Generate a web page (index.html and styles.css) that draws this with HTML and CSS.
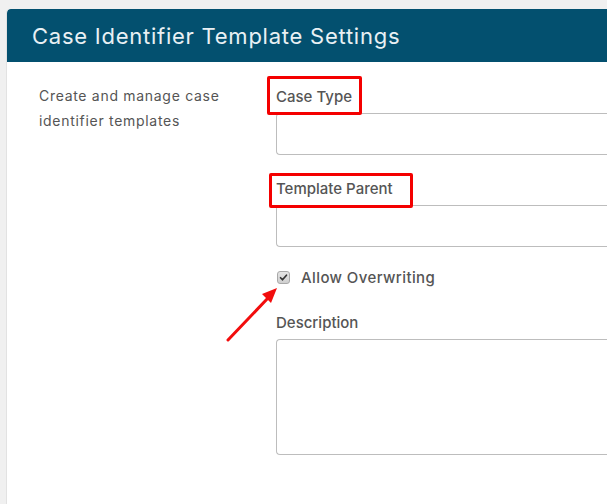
FILE: index.html
```html
<!DOCTYPE html>
<html lang="en">
<head>
<meta charset="utf-8">
<title>Case Identifier Template Settings</title>
<link rel="stylesheet" href="styles.css">
</head>
<body>
<div class="panel">
  <div class="panel-header">
    <h1 class="panel-title">Case Identifier Template Settings</h1>
  </div>
  <div class="panel-body">
    <div class="sidebar">
      <p class="intro">Create and manage case identifier templates</p>
    </div>
    <form class="form">
      <div class="field">
        <label class="field-label"><span class="mark mark-type"></span>Case Type</label>
        <div class="input"></div>
      </div>
      <div class="field">
        <label class="field-label"><span class="mark mark-parent"></span>Template Parent</label>
        <div class="input"></div>
      </div>
      <div class="check-row">
        <span class="checkbox">
          <svg viewBox="0 0 13 13" width="13" height="13"><path d="M3 6.8 L5.3 9.2 L10 3.8" fill="none" stroke="#333" stroke-width="2" stroke-linecap="round" stroke-linejoin="round"/></svg>
        </span>
        <span class="check-label">Allow Overwriting</span>
      </div>
      <div class="field field-desc">
        <label class="field-label">Description</label>
        <div class="textarea"></div>
      </div>
    </form>
    <svg class="arrow" viewBox="0 0 60 60" width="60" height="60">
      <line x1="4" y1="56" x2="44" y2="14" stroke="#f20d0d" stroke-width="3" stroke-linecap="round"/>
      <polygon points="53,4 38,10 47,19" fill="#f20d0d"/>
    </svg>
  </div>
</div>
</body>
</html>
```

FILE: styles.css
```css
html, body {
  margin: 0;
  padding: 0;
}
body {
  background: #f0f0f0;
  padding: 9px 0 0 6px;
  font-family: Inter, "Open Sans", sans-serif;
  overflow: hidden;
  height: 504px;
  box-sizing: border-box;
}
.panel {
  background: #fff;
  border-left: 1px solid #e2e2e2;
  border-top-left-radius: 4px;
  height: 495px;
  overflow: hidden;
}
.panel-header {
  background: #03506f;
  height: 53px;
  display: flex;
  align-items: center;
  padding-left: 25px;
  border-top-left-radius: 4px;
}
.panel-title {
  margin: 0;
  font-size: 22px;
  font-weight: 400;
  color: #e9f0f4;
  letter-spacing: 0.75px;
}
.panel-body {
  position: relative;
  display: grid;
  grid-template-columns: 269px 1fr;
}
.sidebar {
  padding: 22px 0 0 32px;
}
.intro {
  margin: 0;
  width: 215px;
  font-size: 14px;
  line-height: 24.5px;
  letter-spacing: 0.7px;
  color: #555;
}
.form {
  padding-top: 24px;
}
.field {
  margin-bottom: 23px;
}
.field-label {
  position: relative;
  display: inline-block;
  font-size: 15px;
  line-height: 20px;
  font-weight: 500;
  color: #555;
  margin-bottom: 6px;
}
.mark {
  position: absolute;
  border: 3px solid #f40000;
  border-radius: 2px;
  z-index: 2;
}
.mark-type {
  left: -9px;
  top: -11px;
  width: 89px;
  height: 33px;
}
.mark-parent {
  left: -7px;
  top: -6px;
  width: 138px;
  height: 29px;
}
.input {
  height: 40px;
  border: 1px solid #bdbdbd;
  border-right: 0;
  border-radius: 4px 0 0 4px;
  background: #fff;
}
.check-row {
  display: flex;
  align-items: center;
  height: 20px;
  margin-top: -3px;
  gap: 11px;
}
.checkbox {
  width: 13px;
  height: 13px;
  box-sizing: border-box;
  border: 1px solid #a9a9a9;
  border-radius: 3px;
  background: linear-gradient(#e4e4e4, #cfcfcf);
  display: flex;
  align-items: center;
  justify-content: center;
  margin-left: 1px;
}
.checkbox svg {
  display: block;
}
.check-label {
  font-size: 15px;
  font-weight: 500;
  letter-spacing: 0.4px;
  color: #555;
}
.field-desc {
  margin-top: 25px;
}
.textarea {
  height: 114px;
  border: 1px solid #bdbdbd;
  border-right: 0;
  border-radius: 4px 0 0 4px;
}
.arrow {
  position: absolute;
  left: 217px;
  top: 222px;
}
```
